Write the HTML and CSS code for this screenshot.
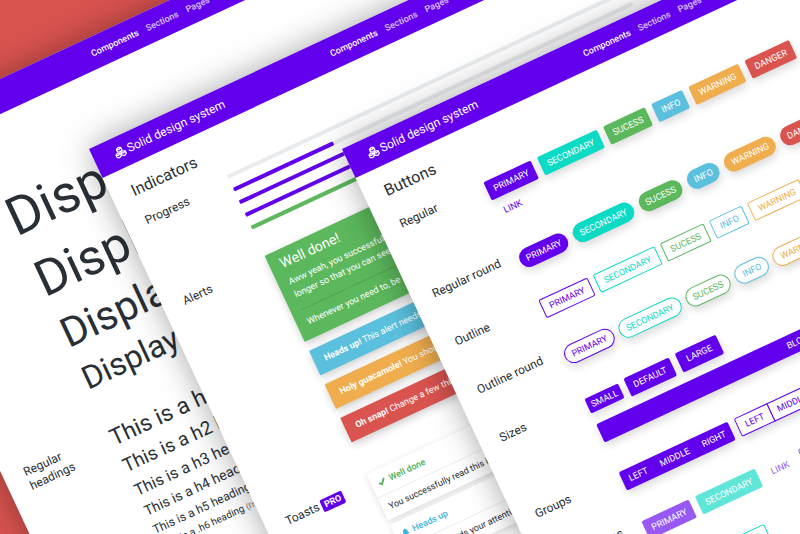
FILE: index.html
```html
<!DOCTYPE html>
<html lang="en">
<head>
<meta charset="utf-8">
<title>Solid design system</title>
<link rel="stylesheet" href="styles.css">
</head>
<body>
<main class="canvas">

  <section class="sheet sheet-type">
    <header class="bar">
      <span class="brand"></span>
      <nav class="nav"><a class="active" href="#">Components</a><a href="#">Sections</a><a href="#">Pages</a></nav>
    </header>
    <div class="rows">
      <div class="row">
        <span></span>
        <div class="stack">
          <p class="display d1">Display 1</p>
          <p class="display d2">Display 2</p>
          <p class="display d3">Display 3</p>
          <p class="display d4">Display 4</p>
        </div>
      </div>
      <div class="row">
        <h3 class="label">Regular<br>headings</h3>
        <div class="stack">
          <h1 class="h h1">This is a h1 heading</h1>
          <h2 class="h h2">This is a h2 heading</h2>
          <h3 class="h h3">This is a h3 heading</h3>
          <h4 class="h h4">This is a h4 heading</h4>
          <h5 class="h h5">This is a h5 heading</h5>
          <h6 class="h h6">This is a .h6 heading <small>(I'm a div)</small></h6>
        </div>
      </div>
    </div>
  </section>

  <section class="sheet sheet-indicators">
    <header class="bar">
      <a class="brand" href="#"><svg class="logo" viewBox="0 0 14 14"><g fill="none" stroke="#fff" stroke-width="1.5" stroke-linejoin="round"><path d="M7 1l2.800 1.400v3L7 6.800 4.200 5.400v-3zM4.200 2.400L7 3.800l2.800-1.400"/><path d="M3.800 6.800l2.800 1.400v3l-2.800 1.400L1 11.200v-3zM1 8.200l2.800 1.400 2.800-1.400"/><path d="M10.200 6.800L13 8.200v3l-2.800 1.400-2.800-1.400v-3zM7.400 8.200l2.800 1.400L13 8.200"/></g></svg>Solid design system</a>
      <nav class="nav"><a class="active" href="#">Components</a><a href="#">Sections</a><a href="#">Pages</a></nav>
    </header>
    <h2 class="title">Indicators</h2>
    <div class="rows">
      <div class="row">
        <h3 class="label">Progress</h3>
        <div class="bars">
          <div class="track"></div>
          <div class="track"><div class="fill quarter"></div></div>
          <div class="track"><div class="fill half"></div></div>
          <div class="track"><div class="fill most"></div></div>
          <div class="track"><div class="fill half green"></div></div>
        </div>
      </div>
      <div class="row">
        <h3 class="label">Alerts</h3>
        <div class="alerts">
          <div class="alert green tall">
            <h4 class="alert-title">Well done!</h4>
            <p>Aww yeah, you successfully read this important alert message. This example text is going to run a bit longer so that you can see how spacing within an alert works.</p>
            <hr>
            <p>Whenever you need to, be sure to use margin utilities.</p>
          </div>
          <div class="alert blue"><strong>Heads up!</strong> This alert needs your attention.</div>
          <div class="alert orange"><strong>Holy guacamole!</strong> You should check this.</div>
          <div class="alert red"><strong>Oh snap!</strong> Change a few things up.</div>
        </div>
      </div>
      <div class="row row-toasts">
        <h3 class="label">Toasts <span class="badge">PRO</span></h3>
        <div class="toasts">
          <div class="toast">
            <div class="toast-head ok"><svg viewBox="0 0 10 10"><path d="M1 5.500l2.800 2.800L9 2" fill="none" stroke="currentColor" stroke-width="2.200"/></svg>Well done</div>
            <p>You successfully read this important message.</p>
          </div>
          <div class="toast">
            <div class="toast-head note"><svg viewBox="0 0 10 10"><path d="M5 0.500c.600 0 .8.400.8.800C7.600 1.700 8 3 8 4.500c0 1.500.5 2 1.200 2.800v.7H.8v-.7C1.500 6.500 2 6 2 4.500 2 3 2.400 1.700 4.200 1.300c0-.4.200-.8.800-.8zM3.800 8.500h2.400c0 .7-.5 1.200-1.200 1.200s-1.200-.5-1.200-1.200z" fill="currentColor"/></svg>Heads up</div>
            <p>This one needs your attention right now.</p>
          </div>
        </div>
      </div>
    </div>
  </section>

  <section class="sheet sheet-buttons">
    <header class="bar">
      <a class="brand" href="#"><svg class="logo" viewBox="0 0 14 14"><g fill="none" stroke="#fff" stroke-width="1.5" stroke-linejoin="round"><path d="M7 1l2.800 1.400v3L7 6.800 4.200 5.400v-3zM4.200 2.400L7 3.800l2.800-1.400"/><path d="M3.800 6.800l2.800 1.400v3l-2.800 1.400L1 11.200v-3zM1 8.200l2.800 1.400 2.800-1.400"/><path d="M10.200 6.800L13 8.200v3l-2.800 1.400-2.800-1.400v-3zM7.400 8.200l2.800 1.400L13 8.200"/></g></svg>Solid design system</a>
      <nav class="nav"><a class="active" href="#">Components</a><a href="#">Sections</a><a href="#">Pages</a></nav>
    </header>
    <h2 class="title">Buttons</h2>
    <div class="rows">
      <div class="row">
        <h3 class="label">Regular</h3>
        <div class="set">
          <div class="line">
            <button class="btn purple">PRIMARY</button><button class="btn teal">SECONDARY</button><button class="btn green">SUCESS</button><button class="btn blue">INFO</button><button class="btn orange">WARNING</button><button class="btn red">DANGER</button>
          </div>
          <div class="line"><button class="btn link">LINK</button></div>
        </div>
      </div>
      <div class="row">
        <h3 class="label">Regular round</h3>
        <div class="line round">
          <button class="btn purple">PRIMARY</button><button class="btn teal">SECONDARY</button><button class="btn green">SUCESS</button><button class="btn blue">INFO</button><button class="btn orange">WARNING</button><button class="btn red">DANGER</button>
        </div>
      </div>
      <div class="row">
        <h3 class="label">Outline</h3>
        <div class="line outline">
          <button class="btn c-purple">PRIMARY</button><button class="btn c-teal">SECONDARY</button><button class="btn c-green">SUCESS</button><button class="btn c-blue">INFO</button><button class="btn c-orange">WARNING</button>
        </div>
      </div>
      <div class="row">
        <h3 class="label">Outline round</h3>
        <div class="line outline round">
          <button class="btn c-purple">PRIMARY</button><button class="btn c-teal">SECONDARY</button><button class="btn c-green">SUCESS</button><button class="btn c-blue">INFO</button><button class="btn c-orange">WARNING</button>
        </div>
      </div>
      <div class="row">
        <h3 class="label">Sizes</h3>
        <div class="sizes">
          <div class="line">
            <button class="btn purple small">SMALL</button><button class="btn purple">DEFAULT</button><button class="btn purple large">LARGE</button>
          </div>
          <button class="btn purple block">BLOCK</button>
        </div>
      </div>
      <div class="row">
        <h3 class="label">Groups</h3>
        <div class="line">
          <div class="group purple"><button class="btn purple">LEFT</button><button class="btn purple">MIDDLE</button><button class="btn purple">RIGHT</button></div>
          <div class="group outline"><button class="btn c-purple">LEFT</button><button class="btn c-purple">MIDDLE</button></div>
        </div>
      </div>
      <div class="row">
        <h3 class="label">Button states</h3>
        <div class="line">
          <button class="btn purple" disabled>PRIMARY</button><button class="btn teal" disabled>SECONDARY</button><button class="btn link" disabled>LINK</button><span class="outline"><button class="btn c-purple" disabled>PRIMARY</button></span>
        </div>
      </div>
      <div class="row">
        <span></span>
        <div class="line outline">
          <button class="btn c-purple">LEFT</button><button class="btn c-teal">SECONDARY</button>
        </div>
      </div>
    </div>
  </section>

</main>
</body>
</html>
```
FILE: styles.css
```css
* { box-sizing: border-box; }
html, body { height: 100%; }
body {
  margin: 0;
  overflow: hidden;
  background: #d9534f;
  color: #292f36;
  font-family: Roboto, "Liberation Sans", sans-serif;
}
h1, h2, h3, h4, h5, h6, p { margin: 0; font-weight: 400; }
a { color: inherit; text-decoration: none; }

/* Tilted sheets fanned out over the canvas */
.canvas { position: relative; height: 100%; overflow: hidden; }
.sheet {
  position: absolute;
  top: 149px;
  width: 1100px;
  min-height: 900px;
  background: #fff;
  transform: rotate(-25deg);
  transform-origin: 0 0;
  box-shadow: 0 0 32px rgba(0, 0, 0, .35);
}
.sheet-type { left: -150px; }
.sheet-indicators { left: 89px; }
.sheet-buttons { left: 342px; }

.bar {
  display: flex;
  align-items: center;
  height: 32px;
  padding-left: 21px;
  background: #6200ee;
  color: #fff;
}
.brand {
  display: flex;
  flex: 0 0 238px;
  align-items: center;
  gap: 2px;
  font-size: 12px;
}
.logo { width: 12px; height: 12px; }
.nav { display: flex; gap: 9px; font-size: 9px; font-weight: 500; }
.nav a { opacity: .75; }
.nav .active { opacity: 1; }

.title { padding: 14px 21px 0; font-size: 16px; line-height: 22px; }
.rows { display: grid; gap: 29px; padding: 14px 21px 0; }
.sheet-type .rows { gap: 33px; padding-top: 69px; }
.sheet-buttons .rows { padding-top: 18px; }
.row { display: grid; grid-template-columns: 93px 440px; }
.label { font-size: 12px; line-height: 15px; white-space: nowrap; }

/* Headings */
.stack { display: flex; flex-direction: column; gap: 5px; }
.display, .h { white-space: nowrap; line-height: 1.2; }
.d1 { font-size: 53px; }
.d2 { font-size: 50px; }
.d3 { font-size: 41px; }
.d4 { font-size: 32px; }
.h1 { font-size: 23px; }
.h2 { font-size: 19px; }
.h3 { font-size: 16px; }
.h4 { font-size: 14px; }
.h5 { font-size: 12px; }
.h6 { font-size: 10px; }
.h6 small { font-size: 8px; opacity: .75; }

/* Colours */
.purple { background: #6200ee; }
.teal { background: #0bdac4; }
.green { background: #5cb85c; }
.blue { background: #5bc0de; }
.orange { background: #f0ad4e; }
.red { background: #d9534f; }

/* Progress */
.bars { display: grid; gap: 10px; }
.track { height: 4px; border-radius: 1px; background: #e9ecef; }
.fill { height: 4px; border-radius: 1px; background: #6200ee; }
.fill.green { background: #5cb85c; }
.quarter { width: 25%; }
.half { width: 50%; }
.most { width: 75%; }

/* Alerts */
.alerts { display: grid; gap: 10px; font-size: 9px; line-height: 13px; }
.alert {
  padding: 7px 11px;
  color: #fff;
  border-radius: 1px;
  box-shadow: 0 3px 8px rgba(0, 0, 0, .2);
}
.alert strong { font-weight: 700; }
.alert.tall { padding-bottom: 10px; line-height: 14px; }
.alert-title { margin-bottom: 6px; font-size: 14px; line-height: 14px; }
.alert hr { margin: 9px 0 6px; border: 0; border-top: 1px solid rgba(0, 0, 0, .12); }

/* Toasts */
.row-toasts { padding-top: 6px; }
.row-toasts .label { padding-top: 2px; }
.badge {
  display: inline-block;
  padding: 0 3px;
  border-radius: 2px;
  background: #6200ee;
  color: #fff;
  font-size: 9px;
  font-weight: 700;
  line-height: 13px;
}
.toasts { display: grid; gap: 5px; font-size: 9px; }
.toast { background: #fff; box-shadow: 0 2px 7px rgba(0, 0, 0, .15); }
.toast-head {
  display: flex;
  align-items: center;
  gap: 4px;
  padding: 0 7px;
  border-bottom: 1px solid #eee;
  font-weight: 500;
  line-height: 26px;
}
.toast-head svg { width: 8px; height: 8px; }
.toast p { padding: 0 7px; line-height: 24px; }
.ok { color: #4caf50; }
.note { color: #3db5da; }

/* Buttons */
.line { display: flex; align-items: center; gap: 7px; }
.line.outline { gap: 6px; }
.set .line + .line { margin-top: 4px; }
.sheet-buttons .row > :last-child { padding-top: 4px; }
.btn {
  height: 20px;
  padding: 0 7px;
  border: 0;
  border-radius: 2px;
  color: #fff;
  font-family: inherit;
  font-size: 9px;
  line-height: 20px;
  box-shadow: 0 4px 8px rgba(0, 0, 0, .15);
}
.btn.link { background: none; color: #6200ee; box-shadow: none; }
.round .btn { border-radius: 10px; }
.outline .btn { background: #fff; border: 1px solid; line-height: 18px; }
.outline .c-purple { color: #6200ee; }
.outline .c-teal { color: #0bdac4; }
.outline .c-green { color: #5cb85c; }
.outline .c-blue { color: #5bc0de; }
.outline .c-orange { color: #f0ad4e; }
.outline:not(.round) .btn { box-shadow: none; }
.btn.small { height: 16px; padding: 0 4px; line-height: 16px; }
.btn.large { height: 21px; padding: 0 9px; line-height: 21px; }
.btn.block { display: block; width: 100%; margin-top: 10px; }
.group { display: flex; border-radius: 2px; box-shadow: 0 4px 8px rgba(0, 0, 0, .15); }
.group .btn { border-radius: 0; box-shadow: none; }
.group.purple .btn { background: none; }
.group.outline .btn:first-child { border-radius: 2px 0 0 2px; }
.group.outline .btn:last-child { border-radius: 0 2px 2px 0; }
.group.outline .btn + .btn { margin-left: -1px; }
.btn:disabled { opacity: .65; box-shadow: none; }
```
